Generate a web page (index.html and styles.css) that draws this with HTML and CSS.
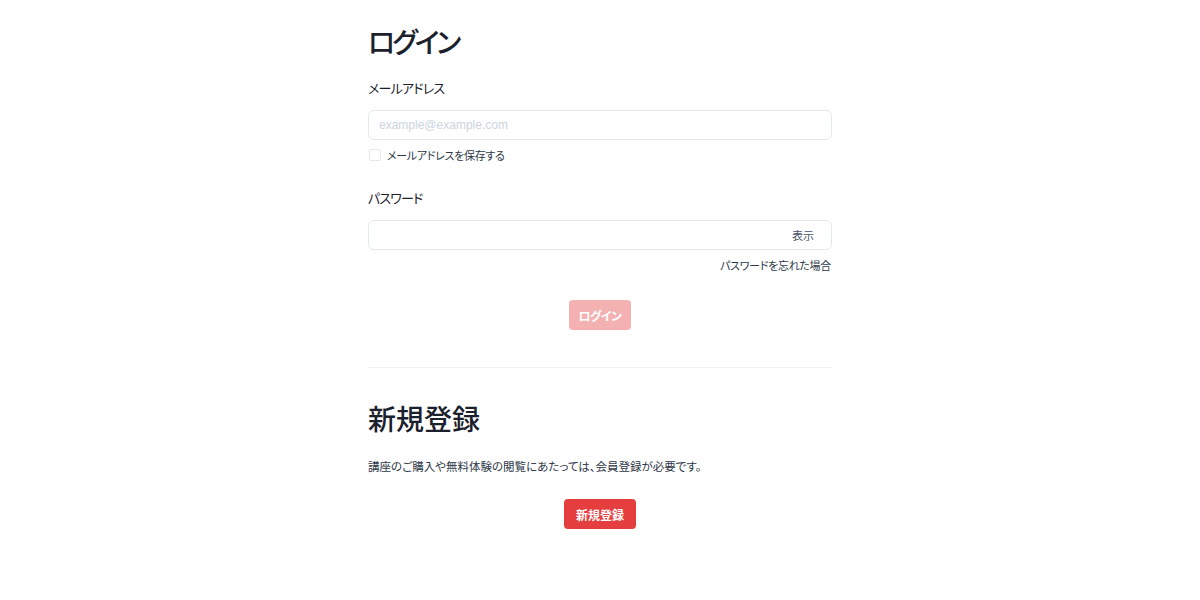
FILE: index.html
```html
<!DOCTYPE html>
<html lang="ja">
<head>
<meta charset="utf-8">
<title>ログイン</title>
<link rel="stylesheet" href="styles.css">
</head>
<body>
<main class="page">
  <section class="login">
    <h1 class="title title-kana">ログイン</h1>
    <label class="label" for="email">メールアドレス</label>
    <input class="field" id="email" type="email" placeholder="example@example.com">
    <label class="remember">
      <span class="check"></span>
      <span>メールアドレスを保存する</span>
    </label>
    <label class="label label-pw" for="pw">パスワード</label>
    <div class="pw-wrap">
      <input class="field" id="pw" type="password">
      <span class="show">表示</span>
    </div>
    <div class="forgot"><a href="#">パスワードを忘れた場合</a></div>
    <div class="actions">
      <button class="btn btn-disabled" type="button">ログイン</button>
    </div>
  </section>
  <hr class="divider">
  <section class="register">
    <h2 class="title">新規登録</h2>
    <p class="note">講座のご購入や無料体験の閲覧にあたっては、会員登録が必要です。</p>
    <div class="actions">
      <button class="btn btn-primary" type="button">新規登録</button>
    </div>
  </section>
</main>
</body>
</html>
```

FILE: styles.css
```css
* { box-sizing: border-box; }

html, body {
  margin: 0;
  background: #ffffff;
}

body {
  font-family: "Noto Sans CJK JP", "Noto Sans", sans-serif;
  font-feature-settings: "palt";
  color: #1a202c;
}

.page {
  width: 464px;
  margin: 0 auto;
  padding-top: 24px;
}

.title {
  margin: 0;
  font-size: 28px;
  line-height: 34px;
  font-weight: 500;
  color: #1a202c;
}

.title-kana {
  letter-spacing: -3px;
}

.label {
  display: block;
  margin-top: 20px;
  font-size: 13px;
  line-height: 20px;
  font-weight: 400;
  letter-spacing: -0.8px;
}

.label-pw {
  margin-top: 25px;
}

.field {
  display: block;
  width: 100%;
  height: 30px;
  margin-top: 12px;
  padding: 0 10px;
  border: 1px solid #e2e8f0;
  border-radius: 6px;
  font-family: "Liberation Sans", "Noto Sans CJK JP", sans-serif;
  font-size: 12px;
  color: #2d3748;
  background: #fff;
  outline: none;
}

.field::placeholder {
  color: #cbd5e0;
}

.remember {
  display: flex;
  align-items: center;
  gap: 6px;
  margin-top: 7px;
  padding-left: 1px;
  font-size: 11px;
  line-height: 16px;
  letter-spacing: -0.3px;
  color: #2d3748;
}

.check {
  width: 12px;
  height: 12px;
  border: 1px solid #e2e8f0;
  border-radius: 2px;
  background: #fff;
}

.pw-wrap {
  position: relative;
}

.show {
  position: absolute;
  right: 18px;
  top: 50%;
  transform: translateY(-50%);
  font-size: 11px;
  line-height: 14px;
  color: #4a5568;
}

.forgot {
  margin-top: 7px;
  text-align: right;
  font-size: 11px;
  line-height: 16px;
  letter-spacing: -0.3px;
}

.forgot a {
  color: #2d3748;
  text-decoration: none;
  margin-right: 1px;
}

.actions {
  display: flex;
  justify-content: center;
}

.login .actions {
  margin-top: 27px;
}

.btn {
  height: 30px;
  padding: 0 12px;
  border: none;
  border-radius: 4px;
  font-family: inherit;
  font-feature-settings: "palt";
  font-size: 12px;
  font-weight: 700;
  color: #fff;
  background: #e53e3e;
}

.btn-disabled {
  opacity: 0.4;
  padding: 0 9px;
  letter-spacing: -0.5px;
}

.divider {
  margin: 37px 0 0;
  border: none;
  border-top: 1px solid #edf2f7;
  height: 0;
}

.register .title {
  margin-top: 33px;
}

.note {
  margin: 22px 0 0;
  font-size: 11.5px;
  line-height: 18px;
  color: #2d3748;
}

.register .actions {
  margin-top: 24px;
}
```
